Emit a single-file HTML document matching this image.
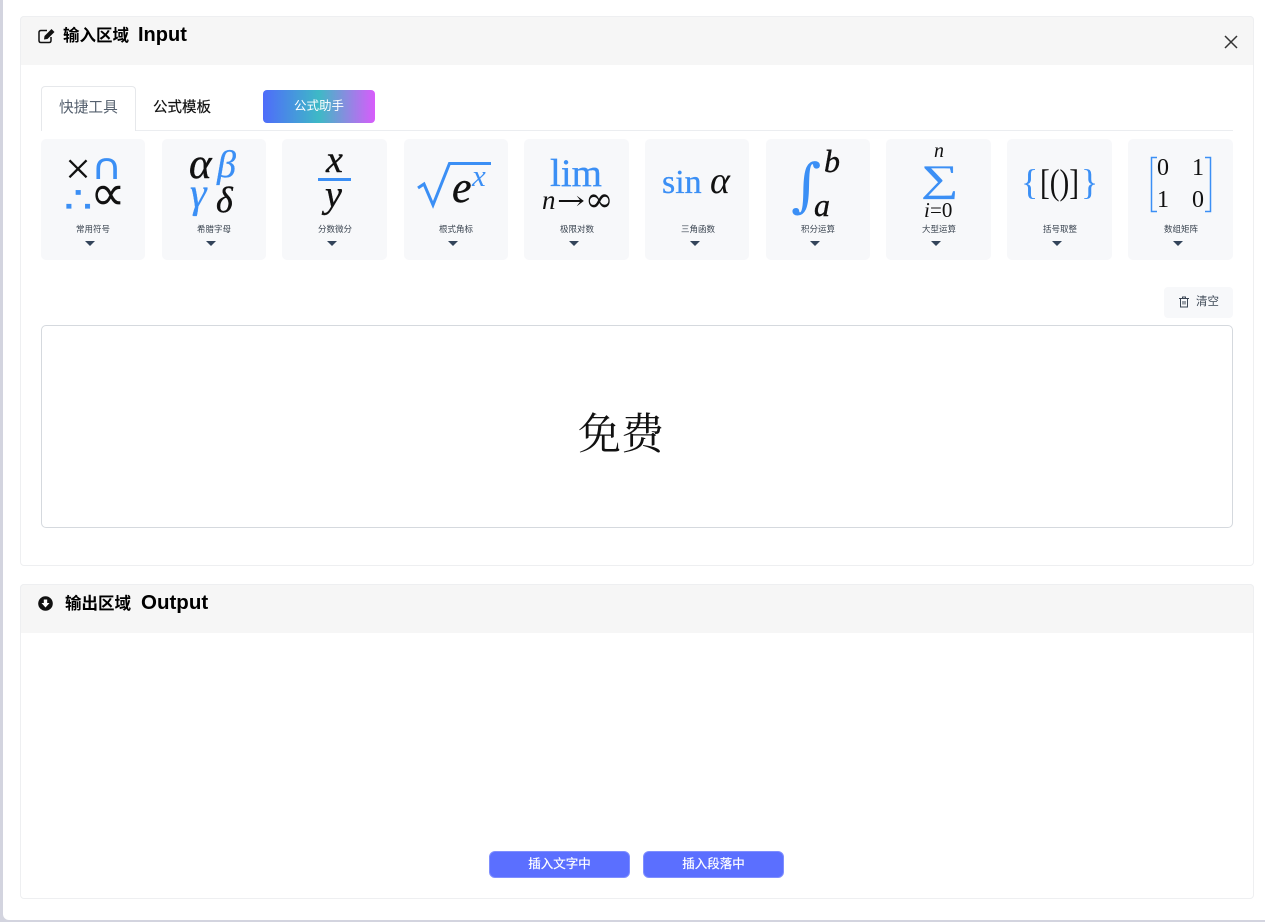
<!DOCTYPE html>
<html lang="zh">
<head>
<meta charset="utf-8">
<style>
html,body{margin:0;padding:0;width:1265px;height:922px;overflow:hidden;background:#d3d4df;}
body{position:relative;font-family:"Liberation Sans","Noto Sans CJK SC",sans-serif;color:#000;}
.a{position:absolute;box-sizing:border-box;}
#page{left:3px;top:-6px;width:1262px;height:926px;background:#fff;border-radius:0 0 0 6px;}
.panel{left:20px;width:1234px;background:#fff;border:1px solid #eeeff1;border-radius:4px;}
.head{left:20px;width:1234px;height:49px;background:#f6f6f6;border-radius:4px 4px 0 0;border:1px solid #eeeff1;border-bottom:0;}
.t{white-space:nowrap;line-height:1;}
.card{top:139px;height:121px;background:#f7f8fa;border-radius:5px;}
.lab{top:224px;font-size:8.5px;line-height:10px;color:#3a4450;text-align:center;width:60px;white-space:nowrap;}
.tri{top:241px;width:0;height:0;border-left:5px solid transparent;border-right:5px solid transparent;border-top:5px solid #33445a;}
.btn{top:851px;width:141px;height:27px;background:#5b6fff;border:1px solid #7f8fff;border-radius:6px;color:#fff;font-size:12.5px;line-height:24px;text-align:center;-webkit-text-stroke:.2px #fff;}
svg{position:absolute;left:0;top:0;}
.k{stroke:#111;stroke-width:.4px;}
.b{stroke:#3b8ff5;stroke-width:.3px;}
</style>
</head>
<body>
<div class="a" id="page"></div>

<div class="a panel" style="top:16px;height:550px"></div>
<div class="a head" style="top:16px"></div>
<svg class="a" style="left:38px;top:28px" width="18" height="16" viewBox="0 0 18 16"><path d="M9 2.500H3Q1 2.500 1 4.500V12.500Q1 14.500 3 14.500H11Q13 14.500 13 12.500V9" fill="none" stroke="#111" stroke-width="1.500"/><path d="M6.500 8L13.500 1L16.500 4L9.500 11L6 11.500Z" fill="#111"/></svg>
<div class="a t" style="left:63px;top:28px;font-size:16.500px;font-weight:bold">输入区域</div>
<div class="a t" style="left:138px;top:25px;font-size:20px;font-weight:bold">Input</div>
<svg class="a" style="left:1223px;top:34px" width="16" height="16" viewBox="0 0 16 16"><path d="M2 2L14 14M14 2L2 14" stroke="#333" stroke-width="1.500" fill="none"/></svg>

<div class="a" style="left:41px;top:130px;width:1192px;height:1px;background:#ebedf0"></div>
<div class="a" style="left:41px;top:86px;width:95px;height:45px;background:#fff;border:1px solid #e6e8eb;border-bottom:0;border-radius:4px 4px 0 0"></div>
<div class="a t" style="left:59px;top:101px;font-size:14.700px;color:#55606e">快捷工具</div>
<div class="a t" style="left:153px;top:101px;font-size:14.500px;color:#111;-webkit-text-stroke:.2px #111">公式模板</div>
<div class="a t" style="left:263px;top:90px;width:112px;height:33px;border-radius:4px;background:linear-gradient(90deg,#4f6cfa 0%,#3eb9c6 50%,#d85cfb 100%);color:#fff;font-size:12.500px;line-height:32px;text-align:center">公式助手</div>

<div class="a card" style="left:41px;width:104px"></div>
<div class="a card" style="left:162px;width:104px"></div>
<div class="a card" style="left:282px;width:105px"></div>
<div class="a card" style="left:404px;width:104px"></div>
<div class="a card" style="left:524px;width:105px"></div>
<div class="a card" style="left:645px;width:104px"></div>
<div class="a card" style="left:766px;width:104px"></div>
<div class="a card" style="left:886px;width:105px"></div>
<div class="a card" style="left:1007px;width:105px"></div>
<div class="a card" style="left:1128px;width:105px"></div>

<div class="a lab" style="left:63px">常用符号</div><div class="a tri" style="left:85px"></div>
<div class="a lab" style="left:184px">希腊字母</div><div class="a tri" style="left:206px"></div>
<div class="a lab" style="left:305px">分数微分</div><div class="a tri" style="left:327px"></div>
<div class="a lab" style="left:426px">根式角标</div><div class="a tri" style="left:448px"></div>
<div class="a lab" style="left:547px">极限对数</div><div class="a tri" style="left:569px"></div>
<div class="a lab" style="left:668px">三角函数</div><div class="a tri" style="left:690px"></div>
<div class="a lab" style="left:788px">积分运算</div><div class="a tri" style="left:810px"></div>
<div class="a lab" style="left:909px">大型运算</div><div class="a tri" style="left:931px"></div>
<div class="a lab" style="left:1030px">括号取整</div><div class="a tri" style="left:1052px"></div>
<div class="a lab" style="left:1151px">数组矩阵</div><div class="a tri" style="left:1173px"></div>

<svg width="1265" height="922" viewBox="0 0 1265 922" style="font-family:'Liberation Serif','DejaVu Serif',serif">
  <!-- card 1 -->
  <text x="65" y="184" font-size="46" fill="#111" font-family="Liberation Serif">×</text>
  <text transform="translate(91,179) scale(1.2,1)" font-size="36" fill="#3b8ff5" font-family="DejaVu Sans">∩</text>
  <text transform="translate(64,212) scale(1.25,1)" font-size="36" fill="#3b8ff5" font-family="DejaVu Sans" class="b">∴</text>
  <text x="90" y="210" font-size="50" fill="#111" font-family="DejaVu Sans">∝</text>
  <!-- card 2 -->
  <g font-style="italic">
    <text x="189" y="178" font-size="43" fill="#111" class="k">α</text>
    <text x="217" y="177" font-size="38" fill="#3b8ff5" class="b">β</text>
    <text x="190" y="207" font-size="42" fill="#3b8ff5" class="b">γ</text>
    <text x="216" y="212" font-size="36" fill="#111" class="k">δ</text>
  </g>
  <!-- card 3 -->
  <g font-style="italic" font-size="38" fill="#111" class="k">
    <text x="326" y="172">x</text>
    <text x="325" y="207">y</text>
  </g>
  <rect x="318" y="178" width="33" height="3" fill="#3b8ff5"/>
  <!-- card 4 -->
  <path d="M418 188L424 184L433 205L449.500 163.500H491" fill="none" stroke="#3b8ff5" stroke-width="3"/>
  <text x="452" y="202" font-size="44" font-style="italic" fill="#111" class="k">e</text>
  <text x="472" y="186" font-size="31" font-style="italic" fill="#3b8ff5">x</text>
  <!-- card 5 -->
  <text x="550" y="186" font-size="39" fill="#3b8ff5" class="b">lim</text>
  <text x="542" y="209" font-size="27" font-style="italic" fill="#111">n</text>
  <text x="557" y="209" font-size="25" fill="#111" font-family="DejaVu Serif" textLength="28" lengthAdjust="spacingAndGlyphs">→</text>
  <text x="585" y="211" font-size="34" fill="#111" font-family="DejaVu Serif">∞</text>
  <!-- card 6 -->
  <text x="662" y="193" font-size="34" fill="#3b8ff5" class="b">sin</text>
  <text x="710" y="193" font-size="38" font-style="italic" fill="#111">α</text>
  <!-- card 7 -->
  <text x="791" y="205" font-size="58" font-style="italic" fill="#3b8ff5" font-family="DejaVu Serif">∫</text>
  <text x="824" y="172" font-size="32" font-style="italic" fill="#111" class="k">b</text>
  <text x="814" y="216" font-size="32" font-style="italic" fill="#111" class="k">a</text>
  <!-- card 8 -->
  <text x="934" y="157" font-size="20" font-style="italic" fill="#111">n</text>
  <text transform="translate(921,191) scale(1.05,.75)" font-size="50" fill="#3b8ff5" class="b">∑</text>
  <text x="924" y="217" font-size="21" font-style="italic" fill="#111">i</text>
  <text x="930" y="217" font-size="21" fill="#111">=0</text>
  <!-- card 9 -->
  <text x="1021" y="194" font-size="36" fill="#3b8ff5">{</text>
  <text x="1040" y="194" font-size="36" fill="#111" textLength="39" lengthAdjust="spacingAndGlyphs">[()]</text>
  <text x="1081" y="194" font-size="36" fill="#3b8ff5">}</text>
  <!-- card 10 -->
  <path d="M1157 157.500H1151.500V211.500H1157M1205 157.500H1210.500V211.500H1205" fill="none" stroke="#3b8ff5" stroke-width="1.500"/>
  <g font-size="24" fill="#111">
    <text x="1157" y="175">0</text>
    <text x="1192" y="175">1</text>
    <text x="1157" y="207">1</text>
    <text x="1192" y="207">0</text>
  </g>
</svg>

<div class="a" style="left:1164px;top:287px;width:69px;height:31px;background:#f7f8fa;border-radius:4px"></div>
<svg class="a" style="left:1178px;top:296px" width="12" height="12" viewBox="0 0 12 12"><path d="M1 2.500H11M4.500 2.500V1H7.500V2.500M2.500 2.500V11H9.500V2.500M5 5V8.500M7 5V8.500" fill="none" stroke="#3b4654" stroke-width="1"/></svg>
<div class="a t" style="left:1196px;top:297px;font-size:11.500px;color:#3b4654">清空</div>

<div class="a" style="left:41px;top:325px;width:1192px;height:203px;background:#fff;border:1px solid #d5d9de;border-radius:5px"></div>
<div class="a t" style="left:578px;top:414px;font-size:43px;color:#111;font-family:'Liberation Serif','Noto Serif CJK SC',serif">免费</div>

<div class="a panel" style="top:584px;height:315px"></div>
<div class="a head" style="top:584px"></div>
<svg class="a" style="left:38px;top:596px" width="15" height="15" viewBox="0 0 15 15"><circle cx="7.500" cy="7.500" r="7.300" fill="#111"/><path d="M5.800 3.500H9.200V7H11.500L7.500 11.500L3.500 7H5.800Z" fill="#fff"/></svg>
<div class="a t" style="left:65px;top:596px;font-size:16.500px;font-weight:bold">输出区域</div>
<div class="a t" style="left:141px;top:593px;font-size:20.500px;font-weight:bold">Output</div>

<div class="a btn" style="left:489px">插入文字中</div>
<div class="a btn" style="left:643px">插入段落中</div>
</body>
</html>
